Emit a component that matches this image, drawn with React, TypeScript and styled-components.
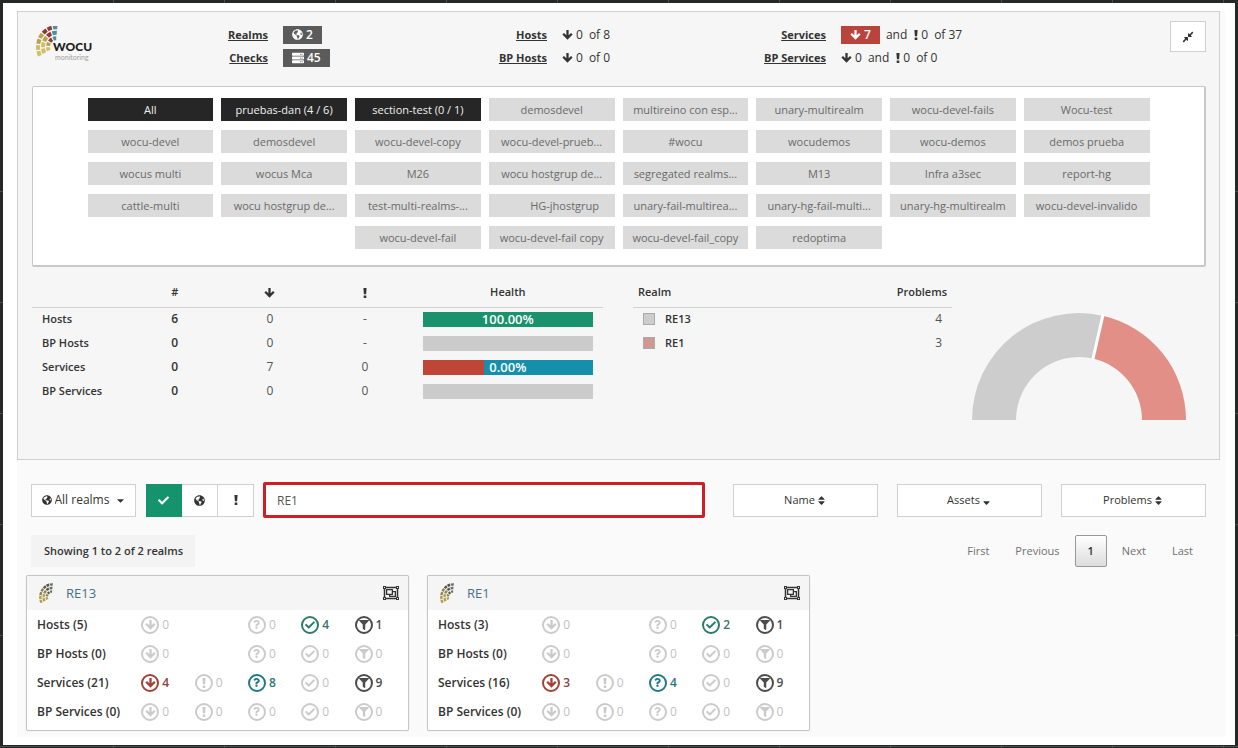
import React, { useState } from "react";
import styled, { createGlobalStyle, css } from "styled-components";
import {
  FaCaretDown,
  FaCheck,
  FaCompressAlt,
  FaFilter,
  FaGlobeAmericas,
  FaQuestion,
  FaRegObjectGroup,
  FaServer,
  FaSort,
  FaSortDown,
} from "react-icons/fa";

const GlobalStyle = createGlobalStyle`
  *, *::before, *::after { box-sizing: border-box; }
  body {
    margin: 0;
    color: #333;
    background-color: #262727;
    background-image:
      repeating-linear-gradient(90deg, transparent 0 110px, #4a4b4b 110px 111px),
      repeating-linear-gradient(180deg, transparent 0 110px, #4a4b4b 110px 111px);
    background-position: 3px 0, 0 81px;
    font: 12px/16px "Open Sans", "Noto Sans", sans-serif;
  }
  button, input, select { font: inherit; color: inherit; margin: 0; }
  button { cursor: pointer; padding: 0; }
  svg { flex: none; }
`;

const Page = styled.div`
  min-height: 100vh;
  padding: 3px;
  display: flex;
`;

const Sheet = styled.div`
  flex: 1;
  background: #fff;
  padding: 8px 10px 8px 14px;
  display: flex;
`;

const Dashboard = styled.main`
  flex: 1;
  background: #fafafa;
`;

const Summary = styled.section`
  margin-right: 5px;
  padding: 0 13px 39px 14px;
  background: #f6f6f6;
  border: 1px solid #cfcfcf;
`;

const Header = styled.header`
  display: grid;
  grid-template-columns: 140fr 279fr 279fr 279fr 197fr;
  padding: 9px 0 17px;
`;

const LogoBox = styled.div`
  display: flex;
  padding: 5px 4px 3px;
`;

const Totals = styled.dl`
  display: grid;
  grid-template-columns: 96px 1fr;
  grid-auto-rows: 23px;
  column-gap: 15px;
  align-items: center;
  align-content: start;
  margin: 2px 0 0;
  white-space: nowrap;
`;

const TotalsLabel = styled.dt`
  text-align: right;
`;

const TotalsLink = styled.a`
  color: #333;
  font-size: 11px;
  font-weight: 700;
  text-decoration: underline;
`;

const TotalsValue = styled.dd`
  margin: 0;
  display: flex;
  align-items: center;
  gap: 3px;
`;

const Joiner = styled.span`
  margin: 0 4px 0 3px;
`;

const Badge = styled.span<{ $alert?: boolean }>`
  display: inline-flex;
  align-items: center;
  gap: 3px;
  height: 18px;
  padding: 0 9px;
  color: #fff;
  font-weight: 600;
  background: ${(p) => (p.$alert ? "#b8443b" : "#5b5b5b")};
`;

const boxed = css`
  background: #fff;
  border: 1px solid #d0d0d0;
  display: flex;
  align-items: center;
  justify-content: center;
`;

const CollapseButton = styled.button`
  ${boxed}
  justify-self: end;
  width: 36px;
  height: 31px;
`;

const SectionBox = styled.nav`
  border: 1px solid #c8c8c8;
  border-right-width: 2px;
  border-bottom-width: 2px;
  border-radius: 2px;
  background: #fff;
  padding: 11px 24px 16px;
`;

const SectionGrid = styled.div`
  max-width: 1062px;
  margin: 0 auto;
  display: grid;
  grid-template-columns: repeat(8, minmax(0, 1fr));
  gap: 9px 8px;
`;

const SectionButton = styled.button<{ $active?: boolean; $indent?: boolean }>`
  height: 23px;
  border: 0;
  padding: 0 6px;
  padding-left: ${(p) => (p.$indent ? "32px" : "6px")};
  overflow: hidden;
  white-space: nowrap;
  font-size: 11px;
  color: ${(p) => (p.$active ? "#f0f0f0" : "#6a6a6a")};
  background: ${(p) => (p.$active ? "#262626" : "#dbdbdb")};
  &:nth-last-child(4) {
    grid-column-start: 3;
  }
`;

const Stats = styled.div`
  display: grid;
  grid-template-columns: 571fr 30px 319fr 254fr;
  align-items: start;
  padding-top: 10px;
`;

const StatTable = styled.table`
  width: 100%;
  border-collapse: collapse;
  table-layout: fixed;
  th, td {
    height: 24px;
    padding: 0 10px;
    text-align: center;
    font-weight: 400;
  }
  th { font-size: 11px; }
  thead th {
    height: 30px;
    font-weight: 600;
    border-bottom: 1px solid #d2d2d2;
  }
  tbody th, td.total {
    font-weight: 600;
  }
  tbody th {
    text-align: left;
    white-space: nowrap;
  }
  td { color: #555; }
  td.total { color: #333; }
  svg { vertical-align: middle; }
`;

const RealmTable = styled(StatTable)`
  grid-column: 3;
  thead th { padding: 0 5px; }
  thead th:first-child { text-align: left; }
  thead th:last-child, td { text-align: right; }
`;

const Swatch = styled.i<{ $color: string }>`
  display: inline-block;
  vertical-align: middle;
  width: 12px;
  height: 12px;
  margin: 0 10px 2px 0;
  background: ${(p) => p.$color};
  border: 1px solid #aaa;
`;

const HealthBar = styled.div<{ $fill: string }>`
  height: 15px;
  font-size: 13px;
  line-height: 15px;
  font-weight: 600;
  color: #fff;
  background: ${(p) => p.$fill};
`;

const ChartBox = styled.div`
  margin-top: 36px;
  display: flex;
  justify-content: center;
`;

const Toolbar = styled.form`
  display: flex;
  align-items: center;
  margin: 22px 19px 0 14px;
`;

const RealmPicker = styled.label`
  ${boxed}
  gap: 3px;
  width: 105px;
  height: 33px;
  margin-right: 10px;
`;

const RealmSelect = styled.select`
  appearance: none;
  border: 0;
  padding: 0;
  margin-right: 2px;
  background: none;
`;

const ToggleGroup = styled.div`
  display: flex;
  margin-right: 9px;
`;

const ToggleButton = styled.button<{ $on?: boolean }>`
  ${boxed}
  width: 36px;
  height: 33px;
  border-left-width: 0;
  ${(p) => p.$on && css`
    background: #14936c;
    border-color: #14936c;
    color: #fff;
  `}
`;

const Search = styled.input`
  flex: 1;
  min-width: 0;
  height: 36px;
  margin-right: 28px;
  padding: 0 11px;
  border: 3px solid #d01f24;
  border-radius: 2px;
  background: #fff;
  color: #555;
  outline: none;
`;

const SortButtons = styled.div`
  display: flex;
  gap: 19px;
`;

const SortButton = styled.button`
  ${boxed}
  gap: 1px;
  width: 145px;
  height: 33px;
  font-size: 11px;
`;

const ListHead = styled.div`
  display: flex;
  justify-content: space-between;
  align-items: center;
  margin: 17px 19px 8px 14px;
  font-size: 11px;
`;

const Count = styled.div`
  padding: 8px 12px 8px 13px;
  background: #f3f3f3;
  font-weight: 600;
`;

const Pager = styled.nav`
  display: flex;
`;

const PageButton = styled.button<{ $current?: boolean }>`
  height: 32px;
  padding: 0 12px;
  border: 1px solid transparent;
  border-radius: 2px;
  background: none;
  color: #707070;
  ${(p) => p.$current && css`
    margin: 0 2px;
    color: #333;
    font-weight: 600;
    border-color: #979797;
    background: linear-gradient(#fff, #dcdcdc);
  `}
`;

const Cards = styled.div`
  display: grid;
  grid-template-columns: repeat(3, 1fr);
  gap: 18px;
  padding: 0 14px 5px 9px;
`;

const Card = styled.article`
  border: 1px solid #c6c6c6;
  border-radius: 2px;
  box-shadow: 0 0 1px #ccc;
  background: #fff;
  padding-bottom: 4px;
`;

const CardHead = styled.div`
  display: flex;
  align-items: center;
  height: 34px;
  padding: 0 9px 0 10px;
  background: #f5f5f5;
`;

const CardLink = styled.a`
  flex: 1;
  margin-left: 12px;
  color: #457286;
  font-size: 13px;
  text-decoration: none;
`;

const IconButton = styled.button`
  display: flex;
  border: 0;
  background: none;
`;

const CardTable = styled.table`
  width: 100%;
  border-collapse: collapse;
  table-layout: fixed;
  th, td {
    height: 29px;
    padding: 0;
    text-align: left;
    white-space: nowrap;
  }
  th {
    width: 30%;
    padding-left: 10px;
    font-weight: 600;
  }
`;

const Counter = styled.span<{ $color: string }>`
  display: flex;
  align-items: center;
  gap: 3px;
  color: ${(p) => p.$color};
`;

const Ring = styled.span`
  display: flex;
  align-items: center;
  justify-content: center;
  width: 18px;
  height: 18px;
  border: 2px solid currentColor;
  border-radius: 50%;
`;

const CounterText = styled.span<{ $muted: boolean; $color: string }>`
  color: ${(p) => p.$color};
  font-weight: ${(p) => (p.$muted ? 400 : 600)};
`;

function ArrowDown() {
  return (
    <svg width="11" height="11" viewBox="0 0 12 12" aria-hidden="true">
      <path d="M6 1V10M1.3 5.2L6 9.9L10.7 5.2" fill="none" stroke="currentColor" strokeWidth="2.5" />
    </svg>
  );
}

function Bang() {
  return (
    <svg width="4" height="10" viewBox="0 0 4 10" aria-hidden="true">
      <path d="M0.4 0H3.6L3.1 6.2H0.9Z M0.7 7.4H3.3V10H0.7Z" fill="currentColor" />
    </svg>
  );
}

type Segment = { d: string; color: string };

function fan(cx: number, cy: number, colors: string[]): Segment[] {
  const rings = [
    { r: 8, n: 4 },
    { r: 13, n: 5 },
    { r: 18, n: 7 },
  ];
  const from = 152;
  const to = 276;
  const out: Segment[] = [];
  rings.forEach(({ r, n }) => {
    const step = (to - from) / n;
    const gap = 34 / r;
    for (let i = 0; i < n; i++) {
      const a = ((from + i * step + gap) * Math.PI) / 180;
      const b = ((from + (i + 1) * step - gap) * Math.PI) / 180;
      const color = colors[Math.min(colors.length - 1, Math.floor((i / n) * colors.length))];
      out.push({
        d: `M${cx + r * Math.cos(a)} ${cy + r * 1.1 * Math.sin(a)} A${r} ${r * 1.1} 0 0 1 ${cx + r * Math.cos(b)} ${cy + r * 1.1 * Math.sin(b)}`,
        color,
      });
    }
  });
  return out;
}

function WocuLogo() {
  return (
    <svg width="58" height="38" viewBox="0 0 58 38" role="img" aria-label="WOCU monitoring">
      {fan(20, 21, ["#d2bd68", "#bba24a", "#8d3b34", "#4f8d9b"]).map((s, i) => (
        <path key={i} d={s.d} stroke={s.color} strokeWidth="4" fill="none" />
      ))}
      <text x="17" y="25" fontFamily="Lato, sans-serif" fontWeight="900" fontSize="12" fill="#1d1d1d">WOCU</text>
      <text x="19" y="34" fontFamily="Lato, sans-serif" fontSize="7" fill="#a0a0a0">monitoring</text>
    </svg>
  );
}

function RealmMark() {
  return (
    <svg width="17" height="20" viewBox="0 0 22 31" aria-hidden="true">
      {fan(21, 22, ["#b3a050", "#8f8447", "#5e5348", "#5f7368"]).map((s, i) => (
        <path key={i} d={s.d} stroke={s.color} strokeWidth="3.8" fill="none" />
      ))}
    </svg>
  );
}

function ProblemsChart() {
  const cx = 107;
  const cy = 107;
  const split = Math.PI * (4 / 7);
  const at = (r: number, t: number) => `${cx - r * Math.cos(t)} ${cy - r * Math.sin(t)}`;
  const slice = (a: number, b: number) =>
    `M${at(107, a)} A107 107 0 0 1 ${at(107, b)} L${at(63, b)} A63 63 0 0 0 ${at(63, a)} Z`;
  return (
    <svg width="214" height="107" viewBox="0 0 214 107" role="img" aria-label="Problems by realm">
      <path d={slice(0, split)} fill="#cdcdcd" />
      <path d={slice(split, Math.PI)} fill="#e28f87" />
      <path d={`M${at(62, split)} L${at(108, split)}`} stroke="#fff" strokeWidth="3" />
    </svg>
  );
}

const sections = [
  "All", "pruebas-dan (4 / 6)", "section-test (0 / 1)", "demosdevel", "multireino con esp...", "unary-multirealm", "wocu-devel-fails", "Wocu-test",
  "wocu-devel", "demosdevel", "wocu-devel-copy", "wocu-devel-prueb...", "#wocu", "wocudemos", "wocu-demos", "demos prueba",
  "wocus multi", "wocus Mca", "M26", "wocu hostgrup de...", "segregated realms...", "M13", "Infra a3sec", "report-hg",
  "cattle-multi", "wocu hostgrup de...", "test-multi-realms-...", "HG-jhostgrup", "unary-fail-multirea...", "unary-hg-fail-multi...", "unary-hg-multirealm", "wocu-devel-invalido",
  "wocu-devel-fail", "wocu-devel-fail copy", "wocu-devel-fail_copy", "redoptima",
];

const EMPTY = "#cbcbcb";
const health = [
  { name: "Hosts", total: "6", down: "0", warn: "-", fill: "#1a926d", text: "100.00%" },
  { name: "BP Hosts", total: "0", down: "0", warn: "-", fill: EMPTY, text: "" },
  { name: "Services", total: "0", down: "7", warn: "0", fill: "linear-gradient(90deg, #bf4637 36%, #158fab 36%)", text: "0.00%" },
  { name: "BP Services", total: "0", down: "0", warn: "0", fill: EMPTY, text: "" },
];

type Kind = "down" | "warn" | "unknown" | "ok" | "filtered";
const kinds: Kind[] = ["down", "warn", "unknown", "ok", "filtered"];
const looks: Record<Kind, { icon: React.ReactNode; color: string; text: string; label: string }> = {
  down: { icon: <ArrowDown />, color: "#a04238", text: "#8a453e", label: "down" },
  warn: { icon: <Bang />, color: "#c29a2c", text: "#80682a", label: "warning" },
  unknown: { icon: <FaQuestion size={9} />, color: "#207a85", text: "#2f7680", label: "unknown" },
  ok: { icon: <FaCheck size={10} />, color: "#2b7d6b", text: "#3a7468", label: "ok" },
  filtered: { icon: <FaFilter size={10} />, color: "#4c4c4c", text: "#4c4c4c", label: "filtered" },
};

type Row = { name: string; values: (number | null)[] };
const realms: { name: string; rows: Row[] }[] = [
  {
    name: "RE13",
    rows: [
      { name: "Hosts (5)", values: [0, null, 0, 4, 1] },
      { name: "BP Hosts (0)", values: [0, null, 0, 0, 0] },
      { name: "Services (21)", values: [4, 0, 8, 0, 9] },
      { name: "BP Services (0)", values: [0, 0, 0, 0, 0] },
    ],
  },
  {
    name: "RE1",
    rows: [
      { name: "Hosts (3)", values: [0, null, 0, 2, 1] },
      { name: "BP Hosts (0)", values: [0, null, 0, 0, 0] },
      { name: "Services (16)", values: [3, 0, 4, 0, 9] },
      { name: "BP Services (0)", values: [0, 0, 0, 0, 0] },
    ],
  },
];

function RealmCard({ name, rows }: { name: string; rows: Row[] }) {
  return (
    <Card>
      <CardHead>
        <RealmMark />
        <CardLink href={`#${name}`}>{name}</CardLink>
        <IconButton type="button" aria-label={`Group ${name}`}>
          <FaRegObjectGroup size={16} />
        </IconButton>
      </CardHead>
      <CardTable>
        <tbody>
          {rows.map((row) => (
            <tr key={row.name}>
              <th scope="row">{row.name}</th>
              {row.values.map((value, i) => {
                const look = looks[kinds[i]];
                return (
                  <td key={kinds[i]}>
                    {value !== null && (
                      <Counter $color={value ? look.color : "#cbcbcb"} aria-label={look.label}>
                        <Ring>{look.icon}</Ring>
                        <CounterText $muted={!value} $color={value ? look.text : "#c2c2c2"}>{value}</CounterText>
                      </Counter>
                    )}
                  </td>
                );
              })}
            </tr>
          ))}
        </tbody>
      </CardTable>
    </Card>
  );
}

export default function App() {
  const [query, setQuery] = useState("RE1");
  return (
    <>
      <GlobalStyle />
      <Page>
        <Sheet>
          <Dashboard>
            <Summary>
              <Header>
                <LogoBox><WocuLogo /></LogoBox>
                <Totals>
                  <TotalsLabel><TotalsLink href="#realms">Realms</TotalsLink></TotalsLabel>
                  <TotalsValue><Badge><FaGlobeAmericas size={11} />2</Badge></TotalsValue>
                  <TotalsLabel><TotalsLink href="#checks">Checks</TotalsLink></TotalsLabel>
                  <TotalsValue><Badge><FaServer size={12} />45</Badge></TotalsValue>
                </Totals>
                <Totals>
                  <TotalsLabel><TotalsLink href="#hosts">Hosts</TotalsLink></TotalsLabel>
                  <TotalsValue><ArrowDown />0<Joiner>of 8</Joiner></TotalsValue>
                  <TotalsLabel><TotalsLink href="#bp-hosts">BP Hosts</TotalsLink></TotalsLabel>
                  <TotalsValue><ArrowDown />0<Joiner>of 0</Joiner></TotalsValue>
                </Totals>
                <Totals>
                  <TotalsLabel><TotalsLink href="#services">Services</TotalsLink></TotalsLabel>
                  <TotalsValue><Badge $alert><ArrowDown />7</Badge><Joiner>and</Joiner><Bang />0<Joiner>of 37</Joiner></TotalsValue>
                  <TotalsLabel><TotalsLink href="#bp-services">BP Services</TotalsLink></TotalsLabel>
                  <TotalsValue><ArrowDown />0<Joiner>and</Joiner><Bang />0<Joiner>of 0</Joiner></TotalsValue>
                </Totals>
                <CollapseButton type="button" aria-label="Collapse"><FaCompressAlt size={12} /></CollapseButton>
              </Header>

              <SectionBox aria-label="Sections">
                <SectionGrid>
                  {sections.map((label, i) => (
                    <SectionButton key={i} type="button" $active={i < 3} $indent={label === "HG-jhostgrup"}>{label}</SectionButton>
                  ))}
                </SectionGrid>
              </SectionBox>

              <Stats>
                <StatTable>
                  <colgroup>
                    <col span={4} style={{ width: `${100 / 6}%` }} />
                    <col />
                  </colgroup>
                  <thead>
                    <tr>
                      <th aria-label="Type" />
                      <th scope="col">#</th>
                      <th scope="col" aria-label="Down"><ArrowDown /></th>
                      <th scope="col" aria-label="Warning"><Bang /></th>
                      <th scope="col">Health</th>
                    </tr>
                  </thead>
                  <tbody>
                    {health.map((row) => (
                      <tr key={row.name}>
                        <th scope="row">{row.name}</th>
                        <td className="total">{row.total}</td>
                        <td>{row.down}</td>
                        <td>{row.warn}</td>
                        <td><HealthBar $fill={row.fill}>{row.text}</HealthBar></td>
                      </tr>
                    ))}
                  </tbody>
                </StatTable>
                <RealmTable>
                  <thead>
                    <tr><th scope="col">Realm</th><th scope="col">Problems</th></tr>
                  </thead>
                  <tbody>
                    <tr><th scope="row"><Swatch $color="#cdcdcd" />RE13</th><td>4</td></tr>
                    <tr><th scope="row"><Swatch $color="#cf9893" />RE1</th><td>3</td></tr>
                  </tbody>
                </RealmTable>
                <ChartBox><ProblemsChart /></ChartBox>
              </Stats>
            </Summary>

            <Toolbar onSubmit={(e) => e.preventDefault()}>
              <RealmPicker>
                <FaGlobeAmericas size={10} />
                <RealmSelect aria-label="Realm scope"><option>All realms</option></RealmSelect>
                <FaCaretDown size={11} />
              </RealmPicker>
              <ToggleGroup>
                <ToggleButton type="button" $on aria-label="Up"><FaCheck size={11} /></ToggleButton>
                <ToggleButton type="button" aria-label="Realms"><FaGlobeAmericas size={11} /></ToggleButton>
                <ToggleButton type="button" aria-label="Problems"><Bang /></ToggleButton>
              </ToggleGroup>
              <Search aria-label="Search realms" value={query} onChange={(e) => setQuery(e.target.value)} />
              <SortButtons>
                <SortButton type="button">Name <FaSort size={11} /></SortButton>
                <SortButton type="button">Assets <FaSortDown size={11} /></SortButton>
                <SortButton type="button">Problems <FaSort size={11} /></SortButton>
              </SortButtons>
            </Toolbar>

            <ListHead>
              <Count>Showing 1 to 2 of 2 realms</Count>
              <Pager aria-label="Pages">
                <PageButton type="button">First</PageButton>
                <PageButton type="button">Previous</PageButton>
                <PageButton type="button" $current>1</PageButton>
                <PageButton type="button">Next</PageButton>
                <PageButton type="button">Last</PageButton>
              </Pager>
            </ListHead>

            <Cards>
              {realms.map((realm) => <RealmCard key={realm.name} {...realm} />)}
            </Cards>
          </Dashboard>
        </Sheet>
      </Page>
    </>
  );
}
